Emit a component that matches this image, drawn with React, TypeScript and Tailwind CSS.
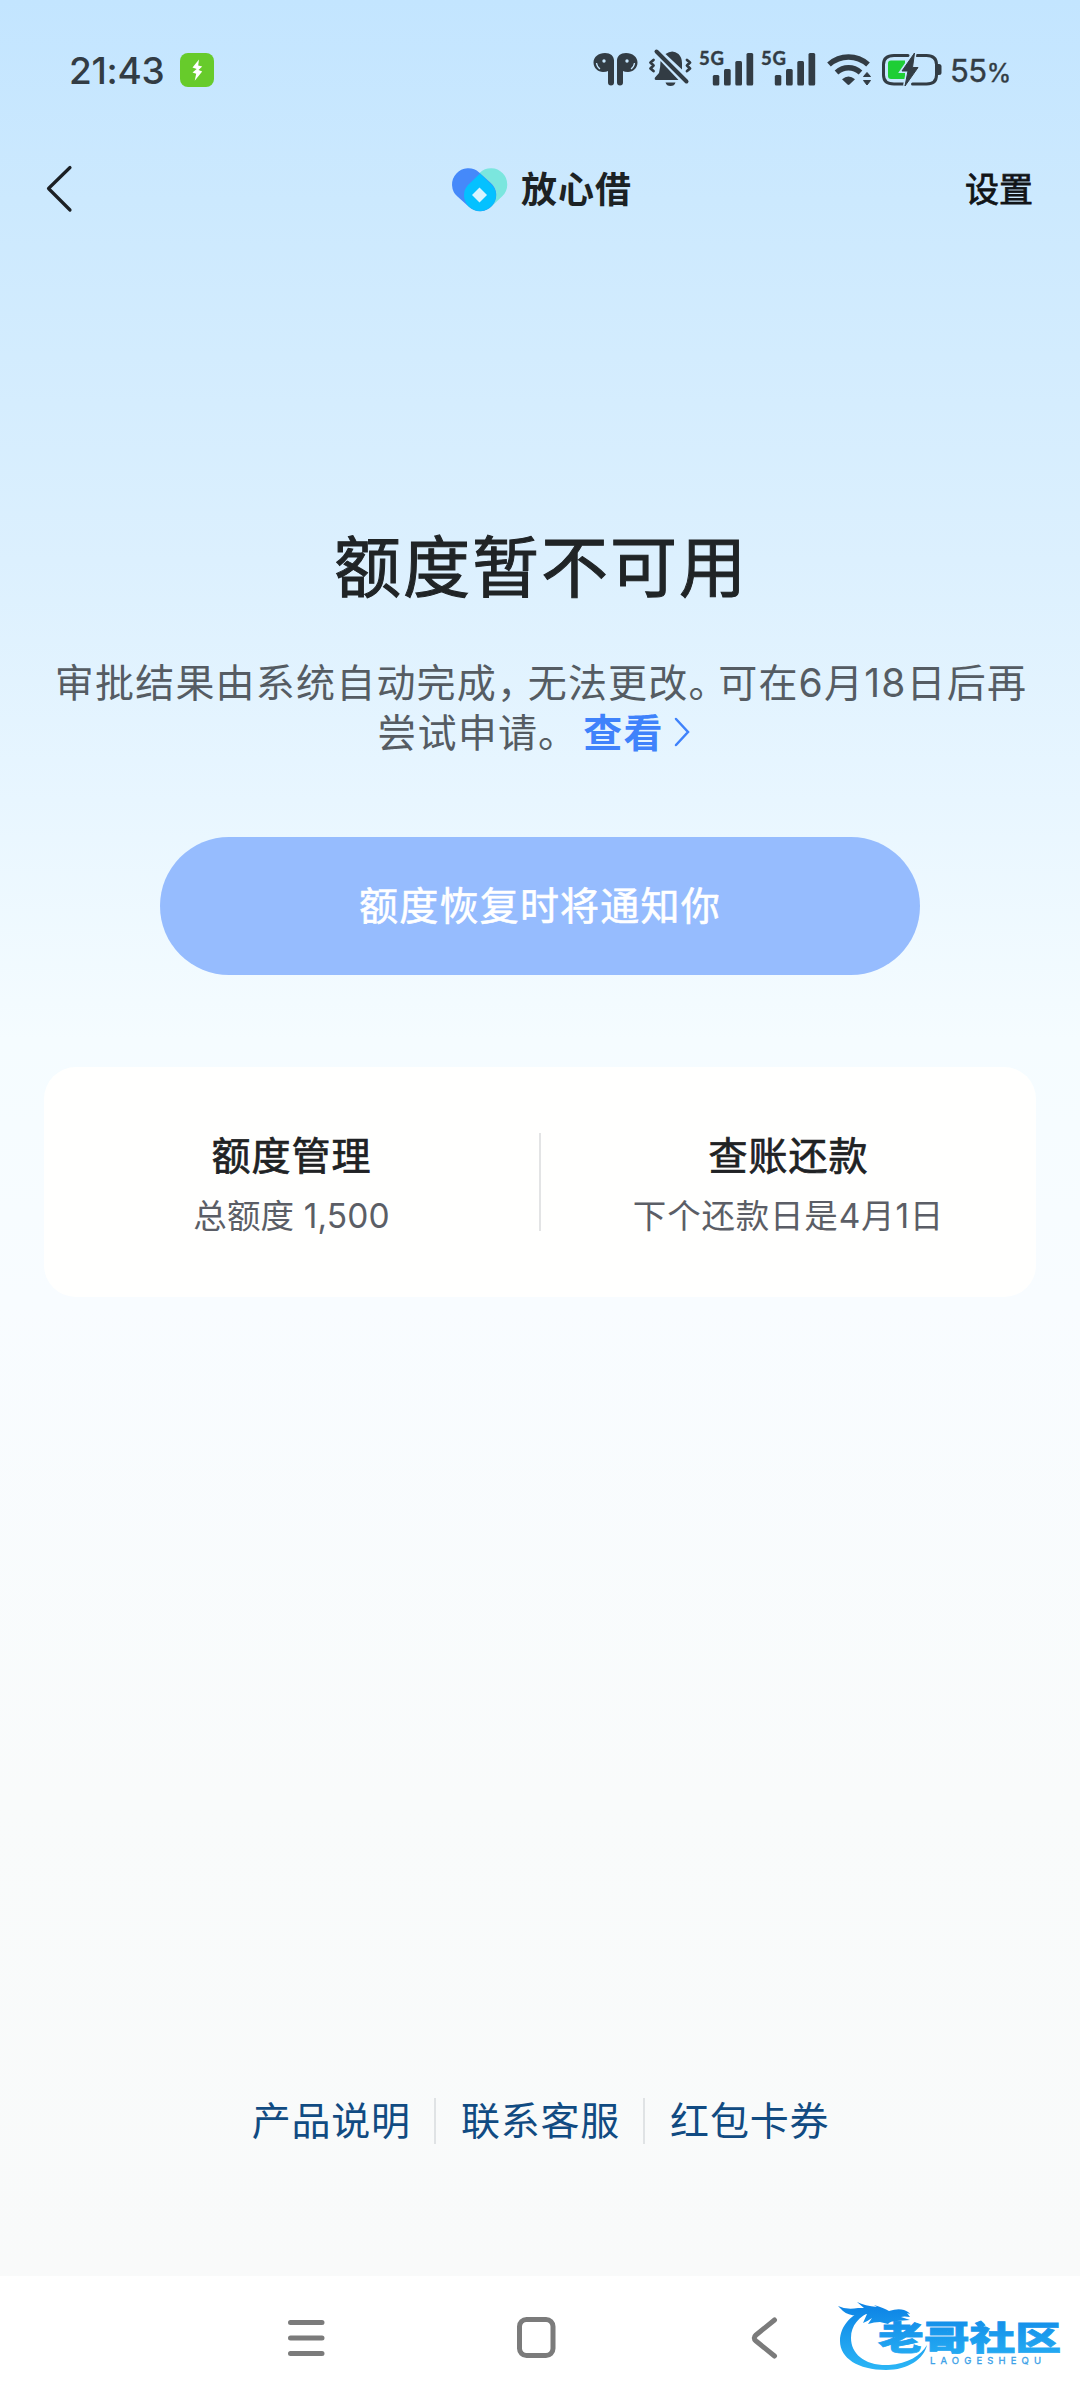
const INK = '#323c44';

function EarbudsIcon() {
  return (
    <svg className="w-[48px] h-[44px]" viewBox="592 48 48 44" fill={INK}>
      <path d="M605 53c5.500 0 9 3 9 7.500V82.500a3 3 0 0 1-6 0V71q-1.500 1-5 1c-5 0-9.500-4-9.500-9.500 0-5.500 5-9.500 11.500-9.500z" />
      <path d="M626 53c-5.500 0-9 3-9 7.500V82.500a3 3 0 0 0 6 0V71q1.500 1 5 1c5 0 9.500-4 9.500-9.500 0-5.500-5-9.500-11.500-9.500z" />
      <g fill="#c6e6fe">
        <circle cx="604" cy="61" r="1.700" />
        <circle cx="627" cy="61" r="1.700" />
      </g>
      <path d="M596.500 63q.5 4 3.500 6M634.500 63q-.5 4-3.500 6" fill="none" stroke="#c6e6fe" strokeWidth="1.300" />
    </svg>
  );
}

function MutedBellIcon() {
  return (
    <svg className="w-[46px] h-[44px]" viewBox="647 48 46 44" fill={INK}>
      <path d="M660.500 61L678.500 80H656q-2-.5-1-2.500l4-4.500q1.500-6 1.500-12zM665.500 54q7-5 13 0 3.500 3.500 3.500 9v6.500z" />
      <path d="M665.500 82.500h10q-1 3.500-5 3.500t-5-3.500z" />
      <path d="M656.500 51.500l30 30" fill="none" stroke={INK} strokeWidth="4" strokeLinecap="round" />
      <path d="M653.500 60l-3 2.500 3 3-3 3 3 2.500M687 60l3 2.500-3 3 3 3-3 2.500" fill="none" stroke={INK} strokeWidth="2.800" strokeLinecap="round" strokeLinejoin="round" />
    </svg>
  );
}

function SignalIcon() {
  return (
    <svg className="w-[56px] h-[44px]" viewBox="698 48 56 44" fill={INK}>
      <text x="699" y="65" fontSize="18.500" fontWeight="700" textLength="25" stroke={INK} strokeWidth=".4" className="font-[Lato,sans-serif]">5G</text>
      <rect x="712.800" y="75" width="6.500" height="10.500" rx="1.500" />
      <rect x="724" y="69" width="6.700" height="16.500" rx="1.500" />
      <rect x="735.300" y="61" width="6.700" height="24.500" rx="1.500" />
      <rect x="746.500" y="53" width="6.700" height="32.500" rx="1.500" />
    </svg>
  );
}

function WifiIcon() {
  return (
    <svg className="w-[46px] h-[44px]" viewBox="826 48 46 44" fill={INK}>
      <g fill="none" stroke={INK} strokeWidth="5.500">
        <path d="M829 64.500q8.500-7.500 19.500-7.500t19.500 7.500" />
        <path d="M836.500 72.500q5.500-4.800 12-4.800t12 4.800" />
      </g>
      <path d="M842 79.200q6.500-5.500 13 0l-5.500 5.300q-1 .8-2 0z" />
      <path d="M863.500 76.500l3.500-4 3.500 4zM863.500 80.500h7l-3.500 4.500z" stroke={INK} strokeLinejoin="round" />
    </svg>
  );
}

function BatteryIcon() {
  return (
    <svg className="w-[62px] h-[44px]" viewBox="881 48 62 44">
      <path d="M908 55.500h-14q-10.500 0-10.500 9v10.500q0 9 10.500 9h10M917 55.500h9.500q10 0 10 9v10.500q0 9-10 9H912.500" fill="none" stroke={INK} strokeWidth="3" strokeLinecap="round" />
      <path d="M937.500 64h1.500q2.500 0 2.500 2.500v6q0 2.500-2.500 2.500h-1.500z" fill={INK} />
      <path d="M891 60.500h14v18.500h-14q-3 0-3-3V63.500q0-3 3-3z" fill="#1ece35" />
      <path d="M914.500 53l-12.500 18h6l-3 15 13-18.500h-5.500z" fill="#c6e6fe" stroke="#c6e6fe" strokeWidth="4" />
      <path d="M914.500 53l-12.500 18h6l-3 15 13-18.500h-5.500z" fill={INK} stroke={INK} strokeWidth="1" strokeLinejoin="round" />
    </svg>
  );
}

function StatusBar() {
  return (
    <div className="flex h-[140px] items-center justify-between pl-[69px] pr-[69px] text-[#323c44]">
      <div className="flex items-center">
        <span className="w-[111px] text-[37px] font-medium leading-none tracking-[-0.3px]">21:43</span>
        <svg className="h-[34px] w-[34px]" viewBox="0 0 34 34">
          <rect width="34" height="34" rx="8" fill="#67cb2b" />
          <path d="M19 6.500l-6.500 8 4.200 1.500-4.200 3.500 3.700 1.200-1.500 7 7.500-9.200-3.700-1.500 3.700-3.500-4-1z" fill="#fff" />
        </svg>
      </div>
      <div className="flex items-center">
        <EarbudsIcon />
        <span className="w-[7px]" />
        <MutedBellIcon />
        <span className="w-[5px]" />
        <SignalIcon />
        <span className="w-[6px]" />
        <SignalIcon />
        <span className="w-[10px]" />
        <WifiIcon />
        <span className="w-[9px]" />
        <BatteryIcon />
        <span className="ml-[7px] w-[61px] whitespace-nowrap text-[31px] leading-none tracking-[-0.5px] [-webkit-text-stroke:0.4px]">
          55<span className="text-[25px]">%</span>
        </span>
      </div>
    </div>
  );
}

function Header() {
  return (
    <header className="flex h-[98px] items-center justify-between pl-[42px] pr-[47px]">
      <svg className="h-[50px] w-[95px]" viewBox="42 164 95 50" fill="none">
        <path d="M70 167.500L48.500 188.500 70 210" stroke="#1c2024" strokeWidth="3.200" strokeLinecap="round" strokeLinejoin="round" />
      </svg>
      <div className="flex items-center gap-[13px] pl-[4px]">
        <svg className="mt-[1px] h-[46px] w-[57px]" viewBox="451 167 57 46">
          <g fill="none" strokeWidth="32.500" strokeLinecap="round">
            <path d="M491 184.500L480 195" stroke="#7be6de" />
            <path d="M468.300 184.500L480 195" stroke="#4589fa" />
          </g>
          <path d="M480 173.500l12 11.500q4 4.500 4 10a16 16 0 0 1-32 0q0-5.500 4-10z" fill="#04c1ff" />
          <path d="M479.500 187.500l7.500 7.500-7.500 7.500-7.500-7.500z" fill="#d9f4ff" />
        </svg>
        <span className="-mr-[4px] mt-[2px] text-[36px] font-bold leading-none tracking-[1px] text-[#1c2224]">放心借</span>
      </div>
      <span className="mt-[1px] w-[95px] text-right text-[34px] leading-none text-[#111417] [-webkit-text-stroke:0.8px]">设置</span>
    </header>
  );
}

const shortcuts = [
  { title: '额度管理', desc: '总额度 1,500', descClass: 'tracking-[0.1px]' },
  { title: '查账还款', desc: '下个还款日是4月1日', descClass: 'tracking-[0.8px]' },
];

const links = ['产品说明', '联系客服', '红包卡券'];

function Watermark() {
  return (
    <svg className="absolute left-[830px] top-[2290px] h-[90px] w-[240px]" viewBox="830 2290 240 90">
      <defs>
        <linearGradient id="wm" x1="0" y1="2300" x2="0" y2="2370" gradientUnits="userSpaceOnUse">
          <stop offset="0" stopColor="#0b80e4" />
          <stop offset="1" stopColor="#2bb6f6" />
        </linearGradient>
      </defs>
      <g fill="url(#wm)">
        <path d="M867 2309c-14 4-27 16-27 32 0 17 18 29 46 29 22 0 38-11 41-25-6 10-19 19-38 20-24 1-38-11-38-27 0-13 8-21 20-27z" />
        <path d="M838 2306q8 4 20 2l6 0-7-6q8 4 20 5l-3-2q10 3 15 6 9-3 15-1 5 2 6 4l-3-1 3 4q-6-1-9 0l9 3-13 1q-7 0-9 3l-8-2q-6 0-12 2l4-6q-4 3-9 5l4-9q-16 4-24-3z" />
      </g>
      <text x="878" y="2350" fontSize="33" fontWeight="900" textLength="183" lengthAdjust="spacingAndGlyphs" fill="url(#wm)" stroke="url(#wm)" strokeWidth=".8">老哥社区</text>
      <text x="930" y="2364" fontSize="9.500" textLength="111" fill="#3a9fe8" stroke="#3a9fe8" strokeWidth=".3">LAOGESHEQU</text>
    </svg>
  );
}

export default function App() {
  return (
    <div className="relative flex h-[2400px] w-[1080px] flex-col overflow-hidden bg-[linear-gradient(180deg,#c3e5ff_0px,#cce9fe_200px,#dcf0fe_560px,#e8f6ff_800px,#f5fcff_1040px,#f8fcff_1300px,#f9fbfb_1800px,#f9fafa_2276px)] font-[Inter,'Noto_Sans_CJK_SC',sans-serif]">
      <StatusBar />
      <Header />

      <main className="flex flex-1 flex-col items-center">
        <h1 className="mt-[296px] pl-[2px] text-[67px] leading-[68px] tracking-[2px] text-[#202426] [-webkit-text-stroke:1px]">额度暂不可用</h1>

        <div className="mt-[56px] flex flex-col items-center whitespace-nowrap text-[39px] leading-[50px] tracking-[1.200px] text-[#555c63]">
          <p className="pl-[2px]">
            审批结果由系统自动完成<span className="mr-[10px] [font-feature-settings:'halt']">，</span>无法更改<span className="mr-[9px] [font-feature-settings:'halt']">。</span>可在6月18日后再
          </p>
          <p className="mr-[9px] flex items-center">
            尝试申请。
            <a className="ml-[5px] font-bold text-[#3f82fb]">查看</a>
            <svg className="ml-[8px] mr-[2px] mb-[3px] h-[34px] w-[20px]" viewBox="0 0 20 34" fill="none">
              <path d="M4 4l12 13L4 30" stroke="#3f82fb" strokeWidth="2.500" strokeLinecap="round" />
            </svg>
          </p>
        </div>

        <button className="mt-[79px] h-[138px] w-[760px] rounded-full bg-[#96bcfe] text-[39px] tracking-[1.200px] text-white [-webkit-text-stroke:0.6px]">
          额度恢复时将通知你
        </button>

        <section className="mt-[92px] flex h-[230px] w-[992px] items-center rounded-[32px] bg-[#fffffe]">
          {shortcuts.map((item, idx) => (
            <div key={item.title} className={`flex h-[98px] flex-1 flex-col items-center justify-center ${idx > 0 ? 'border-l-2 border-[#e3e4e5]' : ''}`}>
              <span className="mt-[8px] text-[39px] leading-[60px] tracking-[1px] text-[#202224] [-webkit-text-stroke:0.7px]">{item.title}</span>
              <span className={`text-[33.500px] leading-[60px] text-[#5b5e66] ${item.descClass}`}>{item.desc}</span>
            </div>
          ))}
        </section>

        <div className="mt-auto mb-[132px] flex items-center pl-[1px]">
          {links.map((link, idx) => (
            <a key={link} className={`flex h-[46px] items-center text-[39px] tracking-[0.800px] text-[#114b82] ${idx > 0 ? 'ml-[23px] border-l-2 border-[#e0e3e5] pl-[25px]' : ''}`}>
              {link}
            </a>
          ))}
        </div>
      </main>

      <nav className="flex h-[124px] items-center bg-white pl-[286px]">
        <svg className="mb-[2px] h-[46px] w-[494px]" viewBox="286 2315 494 46" fill="none" stroke="#7b7b7b" strokeWidth="5" strokeLinecap="round" strokeLinejoin="round">
          <path d="M290.500 2323.500h31.500M290.500 2339h31.500M290.500 2354.500h31.500" />
          <rect x="519.500" y="2320.500" width="33.500" height="36" rx="7" />
          <path d="M774.500 2321L756 2336q-3.500 3 0 6l18.500 15" />
        </svg>
      </nav>
      <Watermark />
    </div>
  );
}
